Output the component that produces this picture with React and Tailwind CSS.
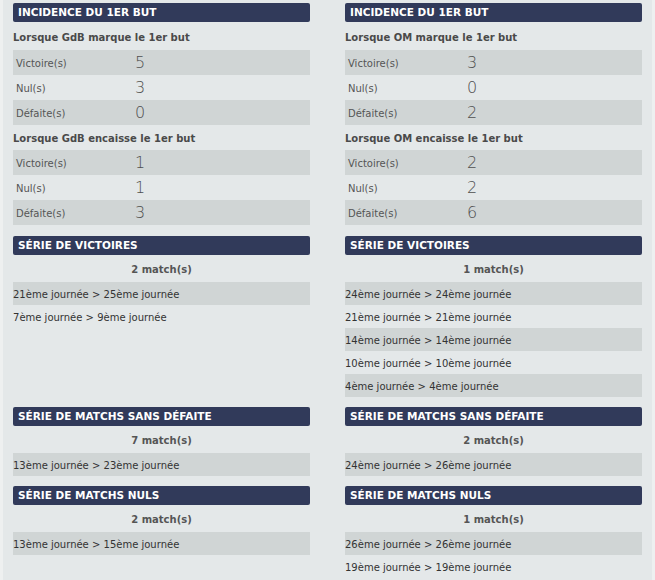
import React from "react";

const font = { fontFamily: "Tahoma, 'DejaVu Sans', Verdana, sans-serif" };

const incidence = [
  {
    left: {
      title: "Lorsque GdB marque le 1er but",
      rows: [["Victoire(s)", 5], ["Nul(s)", 3], ["Défaite(s)", 0]],
    },
    right: {
      title: "Lorsque OM marque le 1er but",
      rows: [["Victoire(s)", 3], ["Nul(s)", 0], ["Défaite(s)", 2]],
    },
  },
  {
    left: {
      title: "Lorsque GdB encaisse le 1er but",
      rows: [["Victoire(s)", 1], ["Nul(s)", 1], ["Défaite(s)", 3]],
    },
    right: {
      title: "Lorsque OM encaisse le 1er but",
      rows: [["Victoire(s)", 2], ["Nul(s)", 2], ["Défaite(s)", 6]],
    },
  },
];

const series = [
  {
    title: "Série de victoires",
    left: { count: 2, rows: [[21, 25], [7, 9]] },
    right: { count: 1, rows: [[24, 24], [21, 21], [14, 14], [10, 10], [4, 4]] },
  },
  {
    title: "Série de matchs sans défaite",
    left: { count: 7, rows: [[13, 23]] },
    right: { count: 2, rows: [[24, 26]] },
  },
  {
    title: "Série de matchs nuls",
    left: { count: 2, rows: [[13, 15]] },
    right: { count: 1, rows: [[26, 26], [19, 19]] },
  },
];

function Header({ children }) {
  return (
    <div className="h-[19px] bg-[#313a5a] rounded-[2px] flex items-center pl-[5px] pt-[1px] text-white font-bold text-[10.5px] uppercase">
      {children}
    </div>
  );
}

function IncidenceBlock({ block, first }) {
  return (
    <div>
      <div
        className={`${first ? "h-[28px] pt-[3px]" : "h-[25px] pt-[1px]"} flex items-center text-[10px] font-bold text-[#4a4a4a]`}
      >
        {block.title}
      </div>
      {block.rows.map(([label, n], i) => (
        <div
          key={label}
          className={`h-[25px] flex items-center ${i % 2 === 0 ? "bg-[#d0d5d5]" : ""}`}
        >
          <span className="w-[122px] pl-[3px] pt-[1px] text-[10px] text-[#555]">{label}</span>
          <span className="text-[16px] leading-none text-[#4f4f4f] font-light">{n}</span>
        </div>
      ))}
    </div>
  );
}

function SerieBlock({ data }) {
  return (
    <div>
      <div className="h-[27px] pt-[2px] flex items-center justify-center text-[10px] font-bold text-[#555]">
        {data.count} match(s)
      </div>
      {data.rows.map(([a, b], i) => (
        <div
          key={i}
          className={`h-[23px] pt-[1px] flex items-center text-[10px] text-[#333] ${i % 2 === 0 ? "bg-[#d0d5d5]" : ""}`}
        >
          {a}ème journée &gt; {b}ème journée
        </div>
      ))}
    </div>
  );
}

export default function App() {
  return (
    <div className="w-[655px] h-[580px] bg-[#eef0f0] overflow-hidden" style={font}>
      <div className="mx-[3px] h-full bg-[#e4e8e9] pl-[10px] pt-[3px]">
        <div className="grid grid-cols-[297px_297px] gap-x-[35px] gap-y-[10px]">
          <div className="pb-[1px]">
            <Header>Incidence du 1er but</Header>
            {incidence.map((b, i) => (
              <IncidenceBlock key={i} block={b.left} first={i === 0} />
            ))}
          </div>
          <div className="pb-[1px]">
            <Header>Incidence du 1er but</Header>
            {incidence.map((b, i) => (
              <IncidenceBlock key={i} block={b.right} first={i === 0} />
            ))}
          </div>
          {series.map((s) => (
            <React.Fragment key={s.title}>
              <div>
                <Header>{s.title}</Header>
                <SerieBlock data={s.left} />
              </div>
              <div>
                <Header>{s.title}</Header>
                <SerieBlock data={s.right} />
              </div>
            </React.Fragment>
          ))}
        </div>
      </div>
    </div>
  );
}
